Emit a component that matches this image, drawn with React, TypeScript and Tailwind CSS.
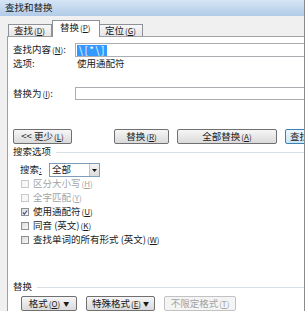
import React from 'react';

const Key = ({ k }: { k: string }) => (
  <span className="text-[8px] ml-px">
    (<span className="underline">{k}</span>)
  </span>
);

const Btn = ({
  children,
  className = '',
  disabled = false,
  primary = false,
}: {
  children: React.ReactNode;
  className?: string;
  disabled?: boolean;
  primary?: boolean;
}) => (
  <div
    className={
      'h-[15px] shrink-0 flex items-center justify-center rounded-[2px] border ' +
      (primary
        ? 'border-[#3c7fb1] bg-gradient-to-b from-[#edf7fd] to-[#c6e6fa] '
        : disabled
          ? 'border-[#c2c2c2] bg-[#f4f4f4] text-[#a3a3a3] '
          : 'border-[#707070] bg-gradient-to-b from-[#f6f6f6] to-[#dadada] ') +
      className
    }
  >
    {children}
  </div>
);

const Check = ({
  label,
  k,
  checked = false,
  disabled = false,
  h,
}: {
  label: string;
  k: string;
  checked?: boolean;
  disabled?: boolean;
  h: string;
}) => (
  <div className={'flex items-center ' + h + (disabled ? ' text-[#a3a3a3]' : '')}>
    <div
      className={
        'ml-[8px] w-[8px] h-[8px] border flex items-center justify-center ' +
        (disabled
          ? 'border-[#c8c8c8] bg-[#f7f7f7]'
          : 'border-[#8e8f8f] bg-gradient-to-br from-[#dcdcdc] to-[#f8f8f8]')
      }
    >
      {checked && (
        <svg width="7" height="7" viewBox="0 0 7 7">
          <path d="M1 3.5 L2.8 5.3 L6 1.2" stroke="#3a4a8c" strokeWidth="1.3" fill="none" />
        </svg>
      )}
    </div>
    <span className="ml-[4px]">
      {label}
      <Key k={k} />
    </span>
  </div>
);

export default function App() {
  return (
    <div className="w-[308px] h-[311px] overflow-hidden bg-white font-['Noto_Sans_CJK_SC',sans-serif] text-[9.5px] leading-none text-[#1a1a1a]">
      <div className="w-[305px] h-full flex flex-col bg-[#f0f0f0] border-r border-[#8c8c8c]">
        <div className="h-[16px] shrink-0 flex items-center pl-[5px] bg-gradient-to-b from-[#d6e5f5] to-[#b1cbe8]">
          查找和替换
        </div>

        <div className="h-[20px] shrink-0 flex items-end pl-[8px]">
          <div className="h-[12px] w-[44px] flex items-center pl-[5px] border border-b-0 border-[#8e9198] bg-gradient-to-b from-[#f7f7f7] to-[#e6e6e6]">
            查找<Key k="D" />
          </div>
          <div className="relative z-10 -mb-px h-[17px] w-[48px] flex items-center pl-[7px] pb-[2px] border border-b-0 border-[#8e9198] bg-white">
            替换<Key k="P" />
          </div>
          <div className="h-[12px] w-[43px] flex items-center pl-[5px] border border-b-0 border-l-0 border-[#8e9198] bg-gradient-to-b from-[#f7f7f7] to-[#e6e6e6]">
            定位<Key k="G" />
          </div>
        </div>

        <div className="ml-[7px] flex-1 min-h-0 flex flex-col overflow-hidden border-l border-t border-[#9ea1a6] bg-white pl-[5px]">
          <div className="mt-[6px] h-[14px] shrink-0 flex items-center">
            <div className="w-[62px] shrink-0">
              查找内容<Key k="N" />:
            </div>
            <div className="w-[260px] shrink-0 h-[14px] border border-[#abadb3] flex items-center pl-[1px]">
              <span className="bg-[#3399ff] text-white text-[10px] tracking-[1.5px] pl-[2px] pr-px h-[11px] flex items-center">
                \[*\]
              </span>
            </div>
          </div>

          <div className="h-[13px] shrink-0 flex items-center">
            <div className="w-[64px] shrink-0">选项:</div>
            <div>使用通配符</div>
          </div>

          <div className="mt-[17px] h-[13px] shrink-0 flex items-center">
            <div className="w-[62px] shrink-0">
              替换为<Key k="I" />:
            </div>
            <div className="w-[260px] shrink-0 h-[13px] border border-[#abadb3]" />
          </div>

          <div className="mt-[29px] h-[15px] shrink-0 flex items-center">
            <Btn className="w-[59px]">
              &lt;&lt; 更少<Key k="L" />
            </Btn>
            <Btn className="ml-[42px] w-[55px]">
              替换<Key k="R" />
            </Btn>
            <Btn className="ml-[8px] w-[100px]">
              全部替换<Key k="A" />
            </Btn>
            <Btn primary className="ml-[8px] w-[70px] !justify-start pl-[4px]">
              查找下一处<Key k="F" />
            </Btn>
          </div>

          <div className="mt-[2px] h-[12px] shrink-0 flex items-center">
            <span>搜索选项</span>
            <div className="ml-[5px] flex-1 h-px bg-[#d5dfe5]" />
          </div>

          <div className="mt-[5px] h-[14px] shrink-0 flex items-center">
            <div className="ml-[7px] w-[29px] shrink-0">
              搜索<span className="underline">:</span>
            </div>
            <div className="w-[51px] h-[14px] flex border border-[#7f9db9] bg-white">
              <div className="flex-1 flex items-center pl-[2px]">全部</div>
              <div className="w-[10px] flex items-center justify-center border-l border-[#c3c3c3] bg-gradient-to-b from-[#f4f4f4] to-[#dcdcdc]">
                <svg width="5" height="3" viewBox="0 0 5 3">
                  <path d="M0 0 H5 L2.5 3 Z" fill="#111" />
                </svg>
              </div>
            </div>
          </div>

          <Check h="h-[15px]" label="区分大小写" k="H" disabled />
          <Check h="h-[14px]" label="全字匹配" k="Y" disabled />
          <Check h="h-[15px]" label="使用通配符" k="U" checked />
          <Check h="h-[14px]" label="同音 (英文)" k="K" />
          <Check h="h-[15px]" label="查找单词的所有形式 (英文)" k="W" />

          <div className="mt-[34px] h-[12px] shrink-0 flex items-center">
            <span>替换</span>
            <div className="ml-[5px] flex-1 h-px bg-[#d5dfe5]" />
          </div>

          <div className="mt-[3px] h-[15px] shrink-0 flex items-center">
            <Btn className="ml-[8px] w-[56px]">
              格式<Key k="O" />
              <span className="ml-[3px] text-[6px]">▼</span>
            </Btn>
            <Btn className="ml-[9px] w-[69px]">
              特殊格式<Key k="E" />
              <span className="ml-[2px] text-[6px]">▼</span>
            </Btn>
            <Btn disabled className="ml-[9px] w-[72px]">
              不限定格式<Key k="T" />
            </Btn>
          </div>
        </div>
      </div>
    </div>
  );
}
